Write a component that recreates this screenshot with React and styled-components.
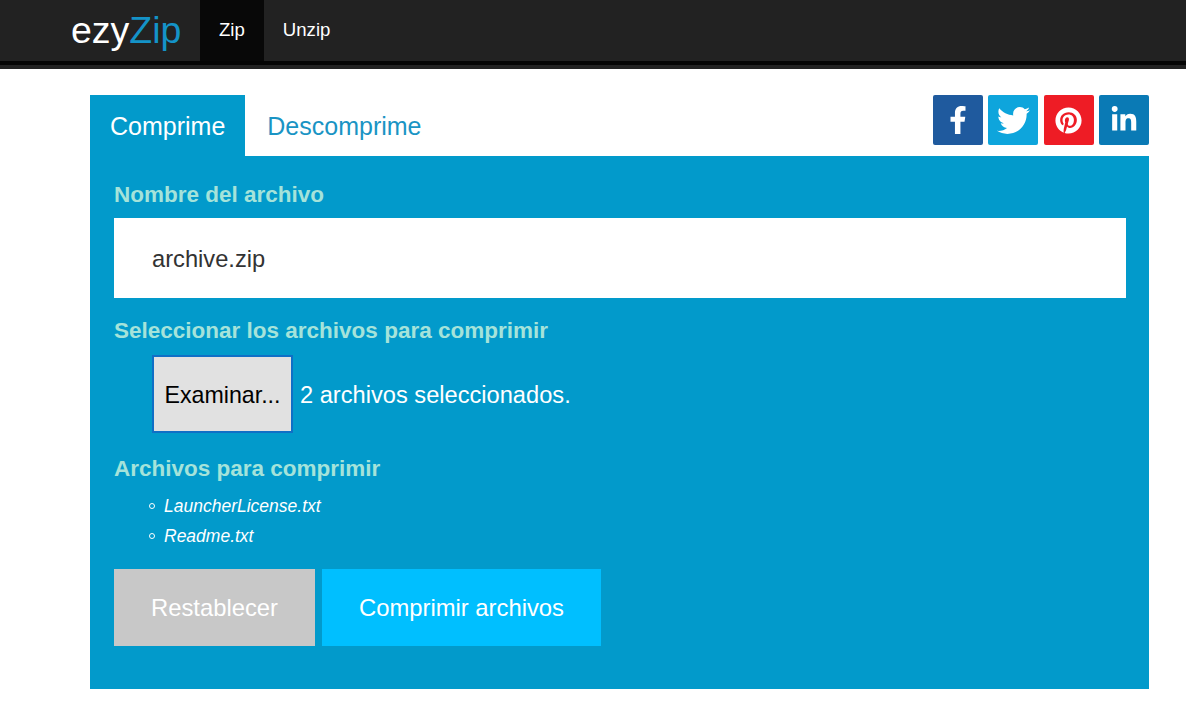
import React from 'react'
import styled, { createGlobalStyle } from 'styled-components'
import { FaFacebookF, FaTwitter, FaPinterest, FaLinkedinIn } from 'react-icons/fa'

const GlobalStyle = createGlobalStyle`
  html, body { margin: 0; padding: 0; background: #fff; }
  body { font-family: "Liberation Sans", Arial, sans-serif; }
`

const socials = [
  { name: 'facebook', color: '#1f5a9e', icon: <FaFacebookF size={28} /> },
  { name: 'twitter', color: '#0ea5dc', icon: <FaTwitter size={33} /> },
  { name: 'pinterest', color: '#ee1c25', icon: <FaPinterest size={27} /> },
  { name: 'linkedin', color: '#0a7ab5', icon: <FaLinkedinIn size={28} /> }
]

const files = ['LauncherLicense.txt', 'Readme.txt']

export default function App () {
  return (
    <>
      <GlobalStyle />
      <Navbar>
        <Brand>ezy<BrandAccent>Zip</BrandAccent></Brand>
        <NavItem $active>Zip</NavItem>
        <NavItem>Unzip</NavItem>
      </Navbar>
      <Main>
        <TabRow>
          <Tab $active>Comprime</Tab>
          <Tab>Descomprime</Tab>
          <Socials>
            {socials.map(s => (
              <SocialLink key={s.name} $color={s.color}>{s.icon}</SocialLink>
            ))}
          </Socials>
        </TabRow>
        <Panel>
          <Label>Nombre del archivo</Label>
          <NameInput readOnly value='archive.zip' />
          <Label>Seleccionar los archivos para comprimir</Label>
          <FileRow>
            <BrowseButton>Examinar...</BrowseButton>
            <FileStatus>2 archivos seleccionados.</FileStatus>
          </FileRow>
          <Label>Archivos para comprimir</Label>
          <FileList>
            {files.map(f => <FileItem key={f}>{f}</FileItem>)}
          </FileList>
          <Actions>
            <ActionButton $color='#c8c8c8' $width={201}>Restablecer</ActionButton>
            <ActionButton $color='#00bfff' $width={279}>Comprimir archivos</ActionButton>
          </Actions>
        </Panel>
      </Main>
    </>
  )
}

const Navbar = styled.nav`
  display: flex;
  align-items: stretch;
  height: 61px;
  padding-left: 71px;
  background: #222;
  border-bottom: 4px solid #050505;
  box-shadow: 0 4px 0 #222;
`

const Brand = styled.div`
  width: 129px;
  font-size: 37.5px;
  line-height: 61px;
  color: #fff;
`

const BrandAccent = styled.span`
  color: #1493c8;
`

const NavItem = styled.div`
  padding: 0 19px;
  font-size: 18.6px;
  line-height: 59px;
  color: #fff;
  background: ${p => (p.$active ? '#080808' : 'transparent')};
`

const Main = styled.main`
  width: 1059px;
  margin: 30px 0 0 90px;
`

const TabRow = styled.div`
  display: flex;
  align-items: flex-start;
  height: 61px;
`

const Tab = styled.div`
  height: 61px;
  padding: 0 20px;
  margin-right: ${p => (p.$active ? '2px' : '0')};
  font-size: 25px;
  line-height: 63px;
  color: ${p => (p.$active ? '#fff' : '#1a94c4')};
  background: ${p => (p.$active ? '#029acb' : 'transparent')};
`

const Socials = styled.div`
  display: flex;
  gap: 5.33px;
  margin-left: auto;
`

const SocialLink = styled.a`
  display: flex;
  align-items: center;
  justify-content: center;
  width: 50px;
  height: 50px;
  border-radius: 2px;
  color: #fff;
  background: ${p => p.$color};
`

const Panel = styled.section`
  box-sizing: border-box;
  height: 533px;
  padding: 25px 23px 0 24px;
  background: #029acb;
`

const Label = styled.div`
  font-size: 22.5px;
  font-weight: bold;
  line-height: 28px;
  color: #a5e3da;
`

const NameInput = styled.input`
  display: block;
  box-sizing: border-box;
  width: 100%;
  height: 80px;
  margin: 9px 0 19px;
  padding: 2px 38px 0;
  border: 0;
  outline: 0;
  font-family: inherit;
  font-size: 23.7px;
  color: #333;
  background: #fff;
`

const FileRow = styled.div`
  display: flex;
  align-items: center;
  gap: 7px;
  margin: 10px 0 22px 38px;
`

const BrowseButton = styled.button`
  box-sizing: border-box;
  width: 141px;
  height: 78px;
  padding: 2px 0 0;
  border: 2px solid #0f6fc6;
  font-family: "Liberation Sans", Arial, sans-serif;
  font-size: 23.2px;
  color: #000;
  background: #e1e1e1;
`

const FileStatus = styled.span`
  padding-top: 2px;
  font-size: 23.65px;
  color: #fff;
`

const FileList = styled.ul`
  margin: 8px 0 0;
  padding: 0 0 0 50px;
  list-style: none;
`

const FileItem = styled.li`
  position: relative;
  font-size: 17.5px;
  font-style: italic;
  line-height: 30px;
  color: #fff;

  &::before {
    content: '';
    position: absolute;
    left: -15px;
    top: 12px;
    box-sizing: border-box;
    width: 6px;
    height: 6px;
    border: 1px solid #fff;
    border-radius: 50%;
  }
`

const Actions = styled.div`
  display: flex;
  gap: 7px;
  margin-top: 18px;
`

const ActionButton = styled.button`
  width: ${p => p.$width}px;
  height: 77px;
  padding: 0;
  border: 0;
  font-family: inherit;
  font-size: 23.8px;
  color: #fff;
  background: ${p => p.$color};
`
